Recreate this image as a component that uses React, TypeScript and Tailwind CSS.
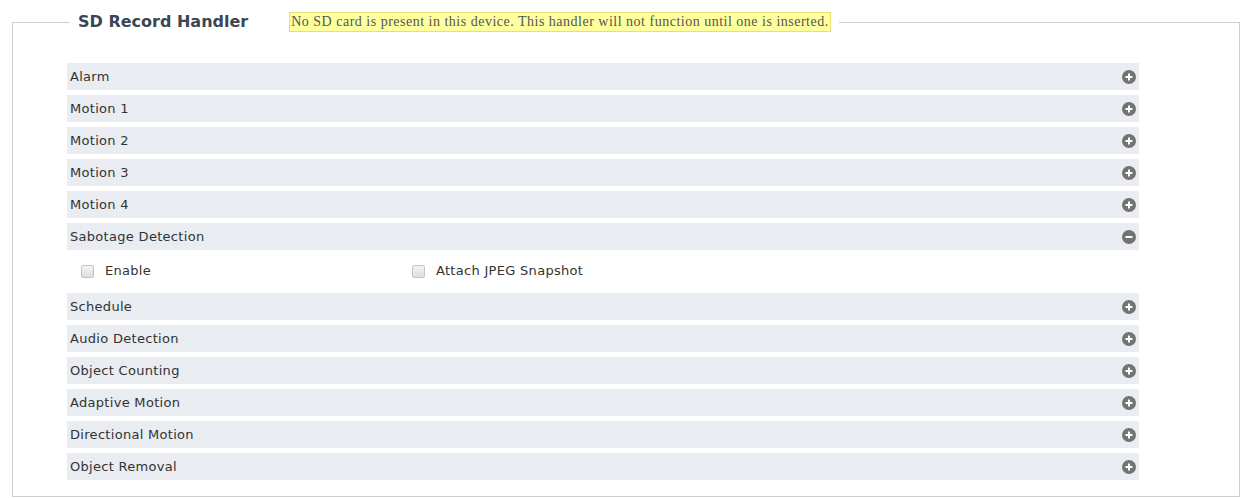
import React, { useState } from 'react';

const handlers = [
  'Alarm',
  'Motion 1',
  'Motion 2',
  'Motion 3',
  'Motion 4',
  'Sabotage Detection',
  'Schedule',
  'Audio Detection',
  'Object Counting',
  'Adaptive Motion',
  'Directional Motion',
  'Object Removal',
];

const ToggleIcon = ({ open }: { open: boolean }) => (
  <svg width="14" height="14" viewBox="0 0 14 14" className="shrink-0">
    <circle cx="7" cy="7" r="7" fill="#737373" />
    <rect x="3.5" y="6" width="7" height="2" fill="#fff" />
    {!open && <rect x="6" y="3.5" width="2" height="7" fill="#fff" />}
  </svg>
);

const Check = ({ label }: { label: string }) => (
  <label className="flex items-center gap-[11px]">
    <span className="w-[13px] h-[13px] rounded-[2px] border border-[#c4c4c4] bg-gradient-to-b from-[#f4f4f4] to-[#dedede]" />
    <span>{label}</span>
  </label>
);

export default function App() {
  const [open, setOpen] = useState<string>('Sabotage Detection');

  return (
    <div className="w-[1243px] h-[498px] bg-white pl-[12px] pr-[3px] pt-[12px] font-['DejaVu_Sans',Verdana,sans-serif] text-[13px] tracking-[0.3px] text-[#333]">
      <fieldset className="border border-[#cfcfcf] pl-[54px] pr-[100px] pt-[31px] pb-[16px] h-[485px]">
        <legend className="ml-[3px] px-[8px] h-[20px] flex items-center tracking-normal">
          <span className="text-[16px] leading-[20px] font-bold text-[#3d4554] mr-[41px]">SD Record Handler</span>
          <span className="bg-[#ffff9e] border border-[#e8e070] px-[1px] h-[20px] leading-[18px] font-['Liberation_Serif',serif] text-[14px] tracking-[0.5px] text-[#555]">
            No SD card is present in this device. This handler will not function until one is inserted.
          </span>
        </legend>

        <div className="flex flex-col gap-[5px]">
          {handlers.map(name => (
            <div key={name}>
              <div
                onClick={() => setOpen(open === name ? '' : name)}
                className="h-[27px] bg-[#e9ecf1] flex items-center justify-between pl-[3px] pr-[3px] cursor-pointer"
              >
                <span>{name}</span>
                <ToggleIcon open={open === name} />
              </div>
              {open === name && (
                <div className="h-[38px] flex items-center pl-[14px] pt-[4px]">
                  <div className="w-[331px]">
                    <Check label="Enable" />
                  </div>
                  <Check label="Attach JPEG Snapshot" />
                </div>
              )}
            </div>
          ))}
        </div>
      </fieldset>
    </div>
  );
}
